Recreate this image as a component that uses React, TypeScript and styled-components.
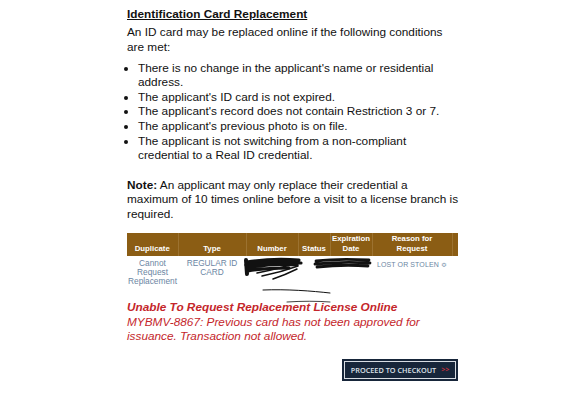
import React from "react";
import styled, { createGlobalStyle } from "styled-components";

const GlobalStyle = createGlobalStyle`
  html, body {
    margin: 0;
    padding: 0;
    background: #ffffff;
  }
  body {
    font-family: "Liberation Sans", Arial, sans-serif;
    color: #111111;
  }
`;

const Page = styled.div`
  width: 587px;
  height: 400px;
  overflow: hidden;
  position: relative;
`;

const Content = styled.div`
  margin-left: 127px;
  width: 332px;
  padding-top: 6px;
  font-size: 11.8px;
  line-height: 14.6px;
`;

const Title = styled.h3`
  margin: 0;
  font-size: 11.8px;
  font-weight: 700;
  text-decoration: underline;
  line-height: 17px;
`;

const Paragraph = styled.p`
  margin: 2px 0 0;
`;

const List = styled.ul`
  margin: 6.5px 0 0;
  padding: 0 0 0 11px;
`;

const Note = styled.p`
  margin: 14.8px 0 0;

  b {
    font-weight: 700;
  }
`;

const TableWrap = styled.div`
  margin-top: 11.5px;
  position: relative;
  width: 331px;
`;

const Table = styled.table`
  border-collapse: collapse;
  width: 331px;
  table-layout: fixed;
`;

const Th = styled.th<{ $w: number }>`
  box-sizing: border-box;
  width: ${(p) => p.$w}px;
  background: #8b5d14;
  color: #ffffff;
  font-size: 7.8px;
  font-weight: 700;
  line-height: 10px;
  padding: 0 1px 2px;
  height: 23px;
  vertical-align: bottom;
  text-align: center;
  border-right: 1px solid #9c7230;

  &:last-child {
    border-right: none;
  }
`;

const Td = styled.td`
  color: #6b86a3;
  font-size: 8.3px;
  line-height: 9px;
  text-align: center;
  vertical-align: top;
  padding: 3.5px 0 2px;
`;

const Reason = styled.span`
  display: inline-block;
  color: #6b86a3;
  font-size: 7px;
  letter-spacing: 0.1px;
  margin-top: 1px;
`;

const Scribble = styled.svg`
  position: absolute;
  left: 0;
  top: 0;
  pointer-events: none;
  overflow: visible;
`;

const ErrorBlock = styled.div`
  margin-top: 12px;
  color: #c4262b;
  line-height: 14.5px;
  font-style: italic;
`;

const ErrorTitle = styled.div`
  font-weight: 700;
`;

const ButtonRow = styled.div`
  display: flex;
  justify-content: flex-end;
  width: 331px;
  margin-top: 15px;
`;

const CheckoutButton = styled.button`
  background: #17263a;
  border: 1px solid #17263a;
  outline: 1px solid #d8dde3;
  outline-offset: -3px;
  color: #dfe4ea;
  font-family: "Open Sans", "Liberation Sans", sans-serif;
  font-size: 7.3px;
  font-weight: 600;
  width: 116px;
  height: 22px;
  padding: 0;
  display: flex;
  align-items: center;
  justify-content: center;
  gap: 5px;
`;

const Arrow = styled.span`
  color: #c7313a;
  font-size: 7px;
  font-weight: 700;
`;

const columns: { label: React.ReactNode; w: number }[] = [
  { label: "Duplicate", w: 51 },
  { label: "Type", w: 68 },
  { label: "Number", w: 52 },
  { label: "Status", w: 32 },
  { label: <>Expiration<br />Date</>, w: 42 },
  { label: <>Reason for<br />Request</>, w: 80 },
  { label: "", w: 6 },
];

export default function App() {
  return (
    <>
      <GlobalStyle />
      <Page>
        <Content>
          <Title>Identification Card Replacement</Title>
          <Paragraph>
            An ID card may be replaced online if the following conditions are met:
          </Paragraph>
          <List>
            <li>There is no change in the applicant's name or residential address.</li>
            <li>The applicant's ID card is not expired.</li>
            <li>The applicant's record does not contain Restriction 3 or 7.</li>
            <li>The applicant's previous photo is on file.</li>
            <li>The applicant is not switching from a non-compliant credential to a Real ID credential.</li>
          </List>
          <Note>
            <b>Note:</b> An applicant may only replace their credential a maximum of 10 times
            online before a visit to a license branch is required.
          </Note>
          <TableWrap>
            <Table>
              <thead>
                <tr>
                  {columns.map((c, i) => (
                    <Th key={i} $w={c.w}>
                      {c.label}
                    </Th>
                  ))}
                </tr>
              </thead>
              <tbody>
                <tr>
                  <Td>
                    Cannot
                    <br />
                    Request
                    <br />
                    Replacement
                  </Td>
                  <Td>
                    REGULAR ID
                    <br />
                    CARD
                  </Td>
                  <Td />
                  <Td />
                  <Td />
                  <Td>
                    <Reason>LOST OR STOLEN ≎</Reason>
                  </Td>
                  <Td />
                </tr>
              </tbody>
            </Table>
            <Scribble width="331" height="80" viewBox="0 0 331 80">
              <g stroke="#111" fill="none" strokeLinecap="round">
                <path d="M120 29 C138 26 155 26 172 27 M119 32 C138 29 158 29 174 30 M120 35 C140 31 160 31 170 32 M121 38 C136 35 150 35 162 35" strokeWidth="3.2" />
                <path d="M119 27 L120 41" strokeWidth="4" />
                <path d="M130 40 C145 37 158 34 172 29 M135 43 C150 40 160 37 171 33 M146 46 C155 43 162 40 170 36" strokeWidth="1.5" />
                <path d="M189 28 C205 26 225 26 242 27 M188 31 C208 29 228 29 243 30 M190 34 C208 32 228 32 241 33" strokeWidth="2.8" />
                <path d="M136 57 C160 56 185 58 203 60" strokeWidth="1" />
                <path d="M160 69 C175 68 190 68 203 69" strokeWidth="0.8" />
              </g>
            </Scribble>
          </TableWrap>
          <ErrorBlock>
            <ErrorTitle>Unable To Request Replacement License Online</ErrorTitle>
            <div>MYBMV-8867: Previous card has not been approved for issuance. Transaction not allowed.</div>
          </ErrorBlock>
          <ButtonRow>
            <CheckoutButton>
              PROCEED TO CHECKOUT <Arrow>&gt;&gt;</Arrow>
            </CheckoutButton>
          </ButtonRow>
        </Content>
      </Page>
    </>
  );
}
